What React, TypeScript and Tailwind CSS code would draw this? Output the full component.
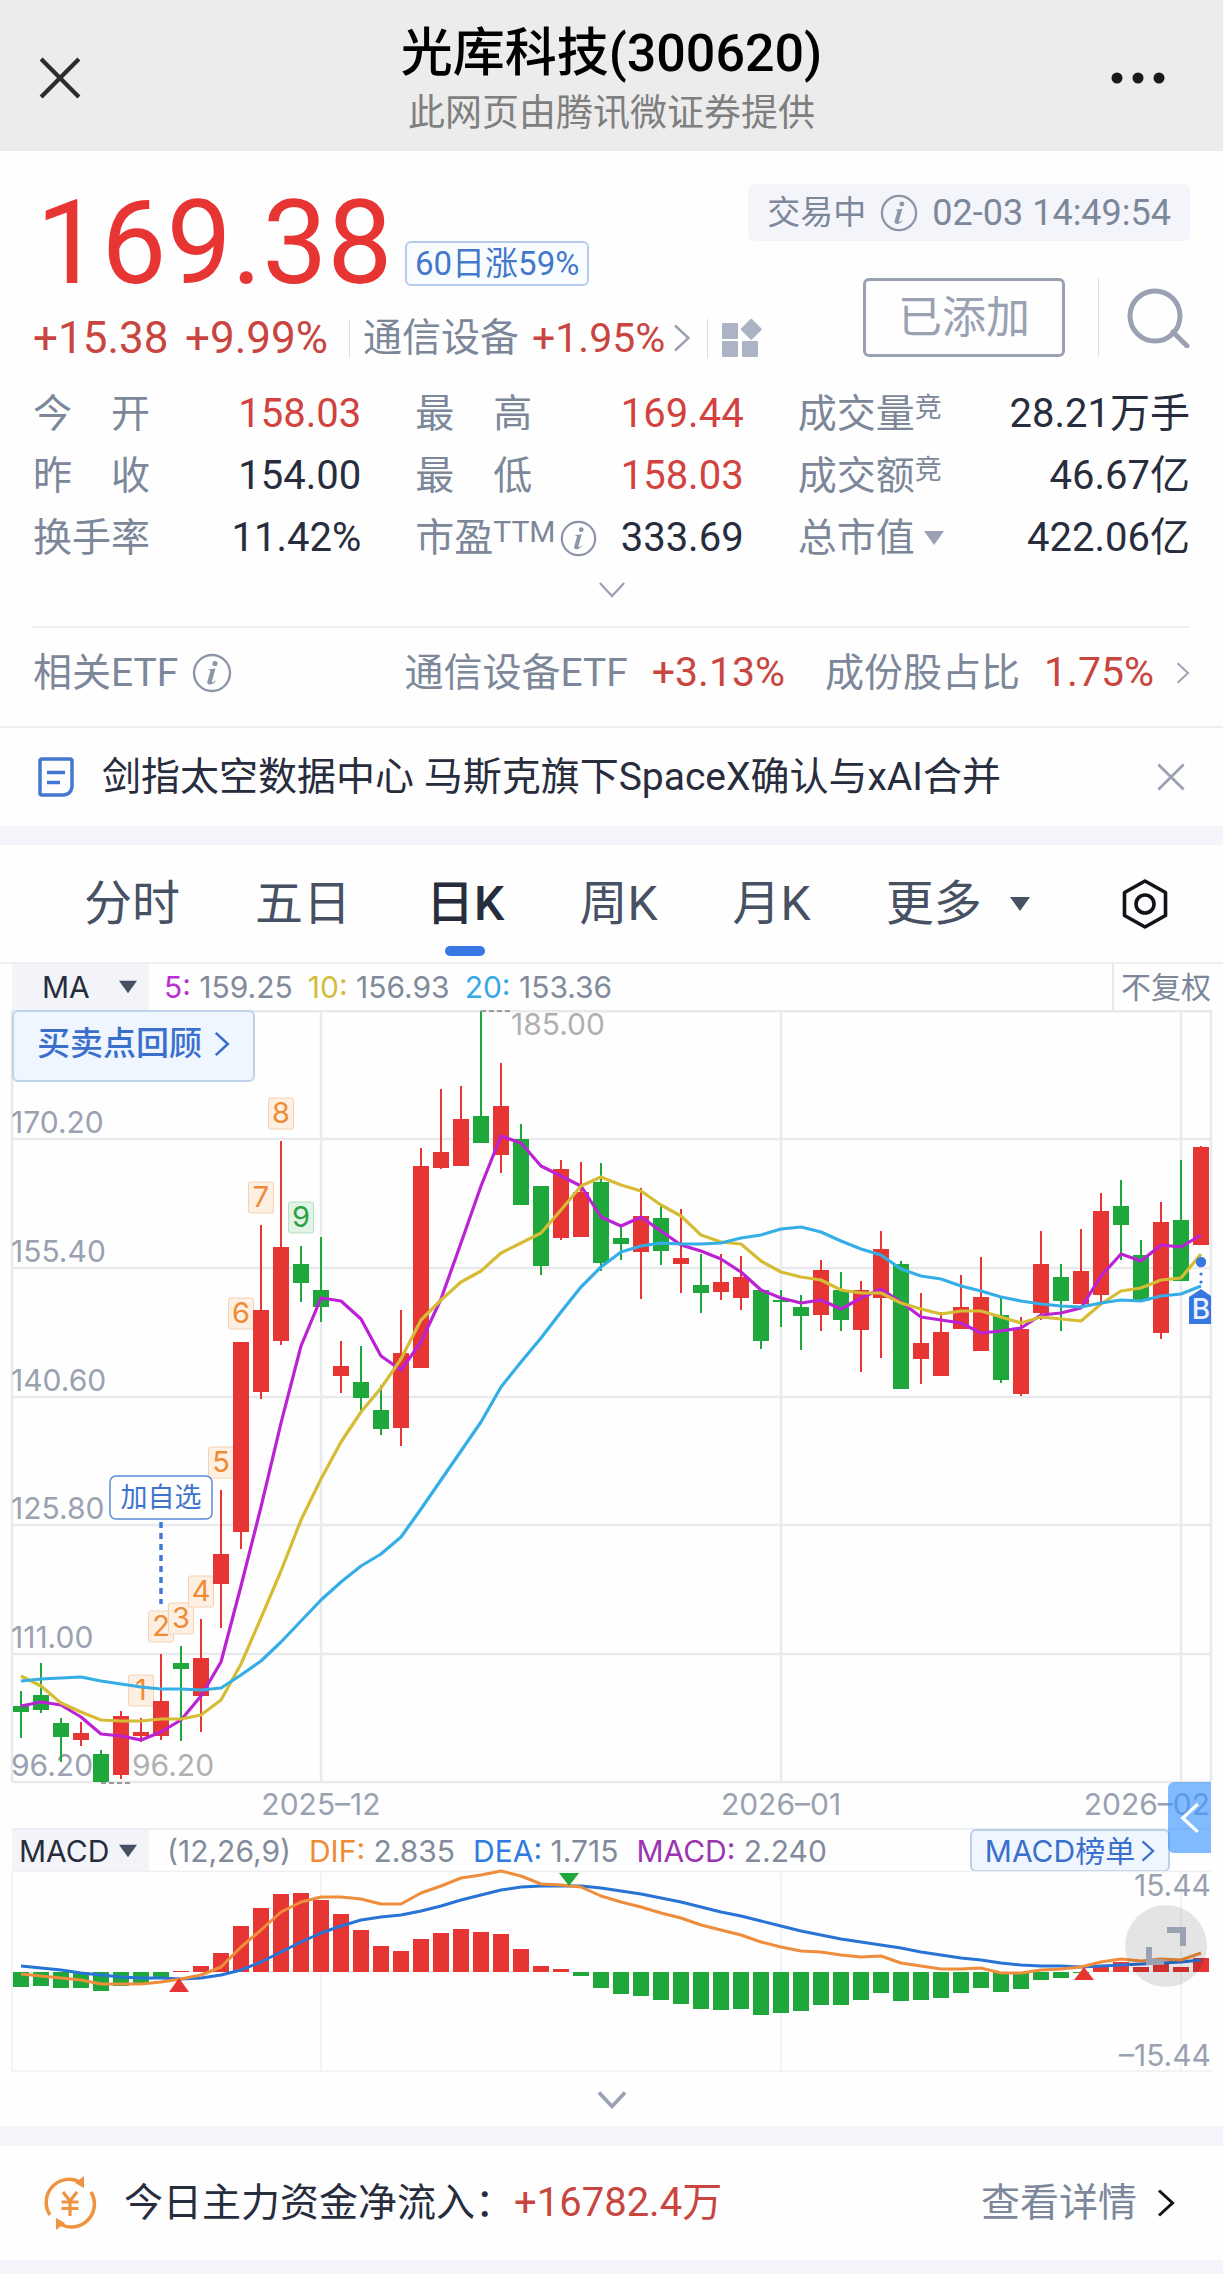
import { useState } from 'react';
import clsx from 'clsx';

// Candle: [direction, high, body top, body bottom, low], y in plot units
type Candle = [1 | 0, number, number, number, number];

const STEP = 20;
const xAt = (i: number) => 9 + i * STEP;

const UP = '#e63533';
const DOWN = '#1ea83c';

const candles: Candle[] = [
    [0, 681, 696, 702, 728], [0, 653, 685, 700, 703], [0, 708, 713, 727, 752], [1, 712, 723, 730, 736],
    [0, 740, 744, 772, 772], [1, 701, 706, 765, 769], [1, 708, 722, 726, 732], [1, 644, 691, 726, 730],
    [0, 636, 653, 659, 731], [1, 609, 648, 686, 722], [1, 480, 544, 574, 618], [1, 332, 332, 522, 539],
    [1, 215, 300, 382, 389], [1, 131, 237, 331, 335], [0, 236, 254, 273, 292], [0, 227, 280, 297, 312],
    [1, 331, 356, 366, 383], [0, 336, 372, 388, 401], [0, 375, 400, 419, 425], [1, 300, 343, 418, 436],
    [1, 138, 156, 358, 358], [1, 79, 142, 158, 159], [1, 76, 109, 156, 156], [0, 1, 106, 133, 133],
    [1, 53, 96, 145, 163], [0, 114, 129, 195, 195], [0, 176, 176, 256, 265], [1, 150, 159, 228, 230],
    [1, 152, 182, 227, 227], [0, 153, 172, 253, 261], [0, 216, 228, 234, 250], [1, 178, 206, 242, 289],
    [0, 196, 208, 241, 255], [1, 199, 248, 254, 283], [0, 244, 275, 283, 303], [1, 244, 272, 282, 290],
    [1, 246, 267, 288, 300], [0, 280, 280, 331, 339], [0, 280, 290, 292, 317], [0, 285, 297, 306, 340],
    [1, 250, 260, 305, 321], [0, 262, 280, 310, 321], [1, 271, 280, 320, 362], [1, 221, 239, 288, 348],
    [0, 251, 254, 379, 379], [1, 283, 333, 349, 374], [1, 302, 322, 366, 366], [1, 265, 297, 319, 319],
    [1, 247, 287, 341, 341], [0, 288, 305, 370, 373], [1, 307, 319, 384, 386], [1, 221, 254, 303, 310],
    [0, 254, 267, 291, 321], [1, 219, 261, 294, 294], [1, 183, 201, 285, 294], [0, 170, 196, 215, 250],
    [0, 230, 245, 291, 291], [1, 192, 212, 323, 329], [0, 150, 210, 271, 271], [1, 136, 137, 235, 235],
];

const ma5 = [
    696, 692, 695, 707, 724, 726, 730, 722, 710, 686, 652, 576, 497, 413, 336, 288, 291, 309, 346, 360,
    332, 289, 233, 176, 126, 133, 156, 166, 176, 207, 216, 207, 221, 235, 241, 249, 262, 280, 288, 293,
    290, 299, 288, 279, 292, 307, 310, 313, 323, 321, 318, 305, 303, 298, 266, 244, 251, 235, 237, 225,
];

const ma10 = [
    666, 676, 693, 702, 710, 711, 711, 709, 709, 705, 690, 654, 608, 561, 510, 469, 432, 402, 378, 349,
    310, 290, 272, 261, 243, 233, 223, 200, 176, 167, 175, 181, 195, 206, 225, 232, 234, 251, 262, 267,
    270, 280, 283, 283, 293, 299, 304, 301, 301, 307, 313, 307, 309, 311, 294, 281, 278, 270, 268, 244,
];

const ma20 = [
    671, 669, 668, 667, 671, 674, 677, 679, 679, 680, 678, 665, 651, 632, 611, 590, 572, 556, 544, 527,
    499, 470, 441, 412, 377, 352, 328, 302, 277, 257, 242, 236, 233, 234, 234, 233, 228, 225, 219, 217,
    222, 231, 239, 245, 259, 266, 269, 276, 281, 287, 291, 294, 296, 297, 293, 290, 291, 286, 284, 276,
];

// MACD histogram, positive values grow upwards from the zero line
const histogram = [
    -15, -14, -16, -16, -19, -14, -11, -6, 1, 6, 19, 46, 64, 78, 79, 72, 58, 42, 26, 21,
    33, 39, 43, 40, 38, 23, 6, 3, -4, -16, -22, -24, -28, -32, -37, -38, -37, -43, -41, -39,
    -33, -33, -28, -21, -29, -28, -26, -21, -16, -20, -17, -8, -6, -1, 5, 10, 5, 8, 5, 14,
];

const dif = [
    103, 105, 107, 109, 113, 113, 113, 111, 108, 104, 96, 76, 59, 41, 31, 26, 26, 28, 33, 33,
    22, 15, 7, 4, 0, 5, 13, 14, 16, 25, 31, 36, 42, 47, 54, 59, 64, 71, 76, 80,
    81, 84, 86, 85, 92, 95, 98, 98, 97, 102, 102, 99, 98, 96, 91, 88, 90, 88, 89, 82,
];

const dea = [
    95, 97, 99, 102, 104, 106, 107, 107, 108, 107, 104, 99, 91, 81, 71, 62, 55, 49, 46, 44,
    40, 35, 29, 24, 19, 16, 15, 15, 15, 17, 20, 23, 27, 31, 36, 41, 45, 50, 55, 60,
    64, 68, 71, 74, 77, 81, 84, 87, 89, 92, 94, 95, 95, 96, 95, 94, 93, 92, 91, 89,
];

// Nine-turn sequence marks: n, candle index, top of the mark
const turns = [
    { n: 1, i: 6, y: 665 },
    { n: 2, i: 7, y: 601 },
    { n: 3, i: 8, y: 593 },
    { n: 4, i: 9, y: 566 },
    { n: 5, i: 10, y: 437 },
    { n: 6, i: 11, y: 288 },
    { n: 7, i: 12, y: 172 },
    { n: 8, i: 13, y: 88 },
    { n: 9, i: 14, y: 192 },
];

const priceAxis = [
    { label: '170.20', y: 129 },
    { label: '155.40', y: 258 },
    { label: '140.60', y: 387 },
    { label: '125.80', y: 515 },
    { label: '111.00', y: 644 },
    { label: '96.20', y: 772 },
];

const monthLines = [309, 769, 1169];

const toPoints = (values: number[]) => values.map((y, i) => `${xAt(i)},${y}`).join(' ');

interface IconProps {
    className?: string;
}

function InfoIcon({ className }: IconProps) {
    return (
        <svg viewBox="0 0 40 40" className={className} fill="none" aria-hidden="true">
            <circle cx="20" cy="20" r="18" stroke="#8d96a8" strokeWidth="2.4" />
            <circle cx="23" cy="10.5" r="2.6" fill="#8d96a8" />
            <path d="M16 16.5 L23.5 15.5 L20 28 Q19.6 30 21 29.3 L24 27 Q22 31.5 17.5 31.5 Q14.5 31.2 15.5 28 L18.5 17.8 Z" fill="#8d96a8" />
        </svg>
    );
}

function Chevron({ className, width = 3 }: IconProps & { width?: number }) {
    return (
        <svg viewBox="0 0 18 28" className={className} fill="none" stroke="currentColor" strokeWidth={width} aria-hidden="true">
            <path d="M2 1.5 L15.5 14 L2 26.5" />
        </svg>
    );
}

function ChevronDown({ className, width = 3 }: IconProps & { width?: number }) {
    return (
        <svg viewBox="0 0 30 18" className={className} fill="none" stroke="#99a1b3" strokeWidth={width} aria-hidden="true">
            <path d="M2 1.5 L15 15.5 L28 1.5" />
        </svg>
    );
}

function Caret({ className }: IconProps) {
    return (
        <svg viewBox="0 0 20 14" className={className} fill="currentColor" aria-hidden="true">
            <path d="M0 0H20L10 14Z" />
        </svg>
    );
}

function Cross({ className, width }: IconProps & { width: number }) {
    return (
        <svg viewBox="0 0 40 40" className={className} fill="none" stroke="currentColor" strokeWidth={width} aria-hidden="true">
            <path d="M2 2 L38 38 M38 2 L2 38" />
        </svg>
    );
}

function TitleBar() {
    return (
        <header className="grid h-[151px] grid-cols-[1fr_auto_1fr] items-center bg-[#ececec] pt-1">
            <button className="ml-[39px] h-[42px] w-[42px] text-[#2c2c2c]" aria-label="关闭">
                <Cross className="h-[42px] w-[42px]" width={4} />
            </button>
            <div className="pt-1 text-center">
                <h1 className="text-[52px] leading-[68px] font-medium text-black">光库科技(300620)</h1>
                <p className="text-[37px] leading-[52px] text-[#7f7f7f]">此网页由腾讯微证券提供</p>
            </div>
            <button className="mr-[57px] justify-self-end" aria-label="更多操作">
                <svg viewBox="0 0 56 14" className="h-[14px] w-[56px]" fill="#1a1a1a">
                    <circle cx="7" cy="7" r="5.5" />
                    <circle cx="28" cy="7" r="5.5" />
                    <circle cx="49" cy="7" r="5.5" />
                </svg>
            </button>
        </header>
    );
}

function Quote() {
    return (
        <div className="flex px-[33px] pt-[33px] whitespace-nowrap">
            <div className="min-w-0 flex-1">
                <div className="flex h-[118px] items-end">
                    <span className="w-[372px] shrink-0 pl-[3px] text-[116px] leading-[118px] text-[#e63533]">169.38</span>
                    <span className="mb-[16px] flex h-[45px] shrink-0 items-center rounded-[6px] border-2 border-[#b5cbee] bg-[#f9fcff] px-2 text-[33px] leading-[40px] text-[#4478c8]">60日涨59%</span>
                </div>
                <div className="mt-[13px] flex h-[46px] items-center text-[39px] leading-[46px]">
                    <span className="w-[152px] shrink-0 text-[44px] text-[#c84540]">+15.38</span>
                    <span className="w-[148px] shrink-0 text-[44px] text-[#c84540]">+9.99%</span>
                    <span className="ml-4 h-[39px] w-px shrink-0 bg-[#dcdfe6]" />
                    <a href="#sector" className="ml-[13px] flex shrink-0 items-center text-[#7c879a]">
                        通信设备
                        <span className="ml-[13px] text-[41px] text-[#c84540]">+1.95%</span>
                        <Chevron className="ml-2 h-[28px] w-[18px] text-[#99a1b3]" width={2.4} />
                    </a>
                    <span className="ml-4 h-[39px] w-px shrink-0 bg-[#dcdfe6]" />
                    <button className="ml-[13px] shrink-0" aria-label="板块">
                        <svg viewBox="0 0 42 40" className="h-[40px] w-[42px]" fill="#abb3c5">
                            <rect x="1" y="5" width="16" height="16" rx="1" />
                            <rect x="1" y="23" width="16" height="16" rx="1" />
                            <rect x="21" y="23" width="16" height="16" rx="1" />
                            <rect x="22.5" y="3.5" width="15.5" height="15.5" rx="1" transform="rotate(45 30.25 11.25)" />
                        </svg>
                    </button>
                </div>
            </div>
            <div className="flex shrink-0 flex-col items-end">
                <div className="flex h-[57px] items-center rounded-[6px] bg-[#f4f5fa] px-[19px] text-[33px] text-[#7c879a]">
                    交易中
                    <InfoIcon className="mx-[14px] h-[38px] w-[38px]" />
                    <span className="text-[36px]">02-03 14:49:54</span>
                </div>
                <div className="mt-[37px] flex h-[79px] items-center">
                    <button className="h-[79px] w-[202px] rounded-[6px] border-[3px] border-[#99a1b3] text-[44px] leading-[70px] text-[#99a1b3]">已添加</button>
                    <span className="ml-[33px] h-[79px] w-px bg-[#dcdfe6]" />
                    <button className="ml-[28px]" aria-label="搜索">
                        <svg viewBox="0 0 63 60" className="h-[60px] w-[63px]" fill="none" stroke="#99a1b3" strokeWidth="5">
                            <circle cx="28" cy="28" r="25" />
                            <path d="M46 44 L60 58" strokeLinecap="round" />
                        </svg>
                    </button>
                </div>
            </div>
        </div>
    );
}

function Stat({ label, value, up }: { label: React.ReactNode; value: string; up?: boolean }) {
    return (
        <div className="flex h-[62px] items-center justify-between">
            <dt className="flex items-center">{label}</dt>
            <dd className={clsx('text-[40px]', up ? 'text-[#d2423e]' : 'text-[#272d3d]')}>{value}</dd>
        </div>
    );
}

function Stats() {
    return (
        <dl className="mx-[33px] mt-[22px] grid grid-cols-[328fr_328fr_392fr] gap-x-[54px] text-[39px] leading-[62px] whitespace-nowrap text-[#7c879a]">
            <Stat label="今　开" value="158.03" up />
            <Stat label="最　高" value="169.44" up />
            <Stat label={<>成交量<span className="self-start text-[27px] leading-[50px]">竞</span></>} value="28.21万手" />
            <Stat label="昨　收" value="154.00" />
            <Stat label="最　低" value="158.03" up />
            <Stat label={<>成交额<span className="self-start text-[27px] leading-[50px]">竞</span></>} value="46.67亿" />
            <Stat label="换手率" value="11.42%" />
            <Stat
                label={
                    <>
                        市盈
                        <span className="self-start text-[30px] leading-[50px]">TTM</span>
                        <InfoIcon className="ml-1 h-[37px] w-[37px]" />
                    </>
                }
                value="333.69"
            />
            <Stat
                label={
                    <span className="relative flex items-center">
                        <select aria-label="市值类型" className="appearance-none bg-transparent pr-[28px]">
                            <option>总市值</option>
                        </select>
                        <Caret className="pointer-events-none absolute right-0 h-[14px] w-[20px] text-[#99a1b3]" />
                    </span>
                }
                value="422.06亿"
            />
        </dl>
    );
}

function EtfRow() {
    return (
        <a href="#etf" className="mx-[33px] flex h-[100px] items-center border-t-2 border-[#eeeff3] pb-2 text-[39px] whitespace-nowrap text-[#7c879a]">
            相关ETF
            <InfoIcon className="ml-[14px] h-[40px] w-[40px]" />
            <span className="ml-auto">通信设备ETF</span>
            <span className="ml-6 text-[41px] text-[#c84540]">+3.13%</span>
            <span className="ml-[40px]">成份股占比</span>
            <span className="ml-6 text-[41px] text-[#c84540]">1.75%</span>
            <Chevron className="ml-[22px] h-[24px] w-[14px] text-[#99a1b3]" width={2.4} />
        </a>
    );
}

function NewsRow({ onClose }: { onClose: () => void }) {
    return (
        <div className="flex h-[100px] items-center border-t-2 border-[#eeeff3] px-[38px]">
            <svg viewBox="0 0 36 40" className="h-[40px] w-[36px]" fill="none" stroke="#4478d0" strokeWidth="3.5" aria-hidden="true">
                <path d="M4 2 H32 Q34 2 34 4 V30 Q33 37 26 38 H4 Q2 38 2 36 V4 Q2 2 4 2 Z" />
                <path d="M9 15.5 H27 M9 25.5 H22" />
            </svg>
            <a href="#news" className="ml-[28px] text-[39px] text-[#272d3d]">剑指太空数据中心 马斯克旗下SpaceX确认与xAI合并</a>
            <button className="ml-auto text-[#99a1b3]" aria-label="关闭资讯" onClick={onClose}>
                <Cross className="h-[28px] w-[28px]" width={4} />
            </button>
        </div>
    );
}

const periods = ['分时', '五日', '日K', '周K', '月K'];

function PeriodTabs() {
    const [active, setActive] = useState('日K');

    return (
        <nav className="flex h-[117px] items-stretch gap-[75px] pr-[55px] pl-[84px] text-[48px] text-[#475164]">
            {periods.map(p => (
                <button
                    key={p}
                    onClick={() => setActive(p)}
                    className={clsx('relative', active === p && 'font-medium text-[#272d3d]')}
                >
                    {p}
                    {active === p && (
                        <span className="absolute bottom-[6px] left-1/2 h-[10px] w-[40px] -translate-x-1/2 rounded-full bg-[#3877e6]" />
                    )}
                </button>
            ))}
            <span className="relative flex items-center">
                <select aria-label="更多周期" className="h-full appearance-none bg-transparent pr-[48px]">
                    <option>更多</option>
                </select>
                <Caret className="pointer-events-none absolute right-0 h-[14px] w-[22px]" />
            </span>
            <button className="ml-auto" aria-label="图表设置">
                <svg viewBox="0 0 46 50" className="h-[50px] w-[46px]" fill="none" stroke="#111318" strokeWidth="3.6" strokeLinejoin="round">
                    <path d="M23 2 L43.5 13.5 V36.5 L23 48 L2.5 36.5 V13.5 Z" />
                    <circle cx="23" cy="25" r="9" />
                </svg>
            </button>
        </nav>
    );
}

function IndicatorSelect({ name, className }: { name: string; className: string }) {
    return (
        <span className="relative flex h-full w-[137px] items-center bg-[#f3f4f9]">
            <select aria-label="指标" className={clsx('h-full w-full appearance-none bg-transparent text-[#272d3d]', className)}>
                <option>{name}</option>
            </select>
            <Caret className="pointer-events-none absolute right-3 h-[14px] w-[18px] text-[#475164]" />
        </span>
    );
}

function MaLegend() {
    return (
        <div className="border-t-2 border-[#eeeff3]">
            <div className="mx-[12px] flex h-[46px] items-center font-['Inter','Noto_Sans_CJK_SC',sans-serif] text-[30px] whitespace-nowrap text-[#828b9b]">
                <IndicatorSelect name="MA" className="pl-[30px]" />
                <span className="ml-[15px]"><span className="text-[#b92fd0]">5:</span> 159.25</span>
                <span className="ml-[15px]"><span className="text-[#d4bc3c]">10:</span> 156.93</span>
                <span className="ml-[15px]"><span className="text-[#38a8e8]">20:</span> 153.36</span>
                <button className="ml-auto h-full border-l-2 border-[#e6e8ec] pl-[7px] leading-[46px] text-[#7c879a]">不复权</button>
            </div>
        </div>
    );
}

function KLineChart() {
    return (
        <div className="relative mx-[12px]">
            <svg viewBox="0 0 1199 818" className="block w-full overflow-visible font-['Inter',sans-serif]">
                <g stroke="#e9eaee" strokeWidth="2.5">
                    <path d="M0 1.2 H1199" />
                    {priceAxis.map(a => <path key={a.label} d={`M0 ${a.y} H1199`} />)}
                    {monthLines.map(x => <path key={x} d={`M${x} 1 V772`} />)}
                    <path d="M0 0 V772 M1199 0 V772" />
                </g>
                <g fontSize="30" fill="#9aa1b1">
                    {priceAxis.map(a => <text key={a.label} x="-1" y={a.y - 6}>{a.label}</text>)}
                    <text x="309" y="805" textAnchor="middle">2025–12</text>
                    <text x="769" y="805" textAnchor="middle">2026–01</text>
                    <text x="1198" y="805" textAnchor="end">2026–02</text>
                </g>

                {/* Sequence marks */}
                {turns.map(t => (
                    <g key={t.n}>
                        <rect
                            x={xAt(t.i) - 12.5}
                            y={t.y}
                            width="25"
                            height="31"
                            rx="2"
                            fill={t.n === 9 ? '#e2f4e6' : '#fdefe2'}
                            stroke={t.n === 9 ? '#b5dfbd' : '#f6d2b4'}
                        />
                        <text x={xAt(t.i)} y={t.y + 25} fontSize="29" textAnchor="middle" fill={t.n === 9 ? '#2ba244' : '#ee8b37'}>{t.n}</text>
                    </g>
                ))}

                {/* Candles */}
                {candles.map(([up, high, top, bottom, low], i) => (
                    <g key={i} fill={up ? UP : DOWN}>
                        <rect x={xAt(i) - 1} y={high} width="2" height={low - high} />
                        <rect x={xAt(i) - 8} y={top} width="16" height={bottom - top} />
                    </g>
                ))}

                <g fill="none" strokeWidth="3.2" strokeLinejoin="round">
                    <polyline points={toPoints(ma5)} stroke="#bb22d3" />
                    <polyline points={toPoints(ma10)} stroke="#d6bc35" />
                    <polyline points={toPoints(ma20)} stroke="#35aee6" />
                </g>

                {/* Highest and lowest price */}
                <g fontSize="30" fill="#b0b0b0">
                    <path d="M469 1 H499 M89 773 H119" stroke="#999" strokeWidth="2" strokeDasharray="5 3" />
                    <text x="499" y="25">185.00</text>
                    <text x="120" y="766">96.20</text>
                </g>

                {/* Added to watchlist */}
                <rect x="98" y="466" width="102" height="43" rx="6" fill="#fff" stroke="#5a8cd8" strokeWidth="1.5" />
                <text x="149" y="497" fontSize="27" textAnchor="middle" fill="#3f74cc" className="font-['Noto_Sans_CJK_SC',sans-serif]">加自选</text>
                <path d="M149 512 V594" stroke="#3f7ad8" strokeWidth="3.5" strokeDasharray="6 5" />

                {/* Buy point */}
                <g fill="#3877e0">
                    <circle cx="1189" cy="252" r="5.2" />
                    <circle cx="1189" cy="264" r="1.6" />
                    <circle cx="1189" cy="272" r="1.6" />
                    <path d="M1189 279 L1199 286 V314 H1177 V287 Z" />
                    <text x="1189" y="309" fontSize="28" fontWeight="500" textAnchor="middle" fill="#eaf2ff">B</text>
                </g>
            </svg>
            <button className="absolute top-0 left-0 flex h-[72px] w-[243px] items-center rounded-[6px] border-2 border-[#bcd3ea] bg-[#eff6ff] pb-1 pl-[23px] text-[33px] font-medium whitespace-nowrap text-[#3a70cc]">
                买卖点回顾
                <Chevron className="ml-3 h-[28px] w-[16px]" />
            </button>
            <button className="absolute right-0 bottom-[-25px] z-10 flex h-[71px] w-[43px] items-center justify-center rounded-l-[6px] bg-[#3d96ff]/65 text-white" aria-label="展开侧栏">
                <Chevron className="h-[32px] w-[20px] rotate-180" />
            </button>
        </div>
    );
}

function MacdPanel() {
    return (
        <div className="relative mx-[12px]">
            <div className="flex h-[43px] items-center border-t-2 border-[#eeeff3] font-['Inter','Noto_Sans_CJK_SC',sans-serif] text-[30px] leading-[38px] whitespace-nowrap text-[#828b9b]">
                <IndicatorSelect name="MACD" className="pl-[7px]" />
                <span className="ml-[18px]">(12,26,9)</span>
                <span className="ml-[18px]"><span className="text-[#ee8b37]">DIF:</span> 2.835</span>
                <span className="ml-[18px]"><span className="text-[#2f7be0]">DEA:</span> 1.715</span>
                <span className="ml-[18px]"><span className="text-[#9a35b0]">MACD:</span> 2.240</span>
                <a href="#macd" className="mr-[41px] ml-auto flex h-[43px] w-[200px] items-center justify-center rounded-[6px] border-2 border-[#bccfe8] bg-[#f0f6ff] text-[#3a70cc]">
                    MACD榜单
                    <Chevron className="ml-1.5 h-[22px] w-[14px]" />
                </a>
            </div>
            <svg viewBox="0 0 1199 201" className="block w-full overflow-visible font-['Inter',sans-serif]">
                <g stroke="#eeeff2" strokeWidth="1.5" fill="none">
                    <path d="M0 0.5 H1199 M0 200 H1199 M0 0 V200" />
                    {monthLines.map(x => <path key={x} d={`M${x} 0 V200`} />)}
                </g>
                {histogram.map((h, i) => (
                    <rect
                        key={i}
                        x={xAt(i) - 8}
                        y={h > 0 ? 101 - h : 101}
                        width="16"
                        height={Math.abs(h)}
                        fill={h > 0 ? UP : DOWN}
                    />
                ))}
                <g fill="none" strokeWidth="3" strokeLinejoin="round">
                    <polyline points={toPoints(dea)} stroke="#2873d6" />
                    <polyline points={toPoints(dif)} stroke="#ee8d3c" />
                </g>
                {/* Golden and death crosses */}
                <path d="M167 107 L177 121 H157 Z M1072 96 L1082 109 H1062 Z" fill={UP} />
                <path d="M557 15 L547 2 H567 Z" fill={DOWN} />
                <g fontSize="30" fill="#9aa1b1" textAnchor="end">
                    <text x="1199" y="25">15.44</text>
                    <text x="1199" y="195">–15.44</text>
                </g>
            </svg>
            <button className="absolute top-[77px] right-[4px] h-[82px] w-[82px] rounded-full bg-black/10" aria-label="全屏">
                <svg viewBox="0 0 82 82" className="h-[82px] w-[82px]" fill="none" stroke="#9aa1b3" strokeWidth="6">
                    <path d="M42 25 H58 V41 M24 42 V57 H39" />
                </svg>
            </button>
        </div>
    );
}

function FundFlow() {
    return (
        <a href="#fund" className="flex h-[114px] items-center pr-[48px] pl-[43px] text-[39px] whitespace-nowrap text-[#272d3d]">
            <svg viewBox="0 0 54 56" className="h-[56px] w-[54px]" fill="none" stroke="#ee9440" strokeWidth="3.5" aria-hidden="true">
                <path d="M7 40 A23 23 0 0 1 37 7" />
                <path d="M48 17 A23 23 0 0 1 17 49" />
                <path d="M41 1 V13 L32 8 Z M13 55 V43 L22 48 Z" fill="#ee9440" stroke="none" />
                <path d="M20 17 L27 26 L34 17 M18.5 27 H35.5 M18.5 33.5 H35.5 M27 26 V41" strokeWidth="3.2" />
            </svg>
            <span className="ml-[27px]">今日主力资金净流入：</span>
            <span className="text-[40px] text-[#c84540]">+16782.4万</span>
            <span className="ml-auto text-[#7c879a]">查看详情</span>
            <Chevron className="ml-[20px] h-[28px] w-[18px] text-[#111318]" />
        </a>
    );
}

export default function App() {
    const [showNews, setShowNews] = useState(true);

    return (
        <div className="flex min-h-screen flex-col bg-[#f4f5fa] font-['Roboto','Noto_Sans_CJK_SC',sans-serif]">
            <TitleBar />
            <section className="bg-[#fefefe]">
                <Quote />
                <Stats />
                <button className="flex h-[57px] w-full justify-center pt-3" aria-label="展开更多行情">
                    <ChevronDown className="h-[18px] w-[28px]" width={2.4} />
                </button>
                <EtfRow />
                {showNews && <NewsRow onClose={() => setShowNews(false)} />}
            </section>
            <section className="mt-[19px] bg-[#fefefe]">
                <PeriodTabs />
                <MaLegend />
                <KLineChart />
                <MacdPanel />
                <button className="flex h-[54px] w-full justify-center pt-[19px]" aria-label="展开更多指标">
                    <ChevronDown className="h-[18px] w-[32px]" width={3.6} />
                </button>
            </section>
            <section className="mt-[20px] bg-[#fefefe]">
                <FundFlow />
            </section>
        </div>
    );
}
